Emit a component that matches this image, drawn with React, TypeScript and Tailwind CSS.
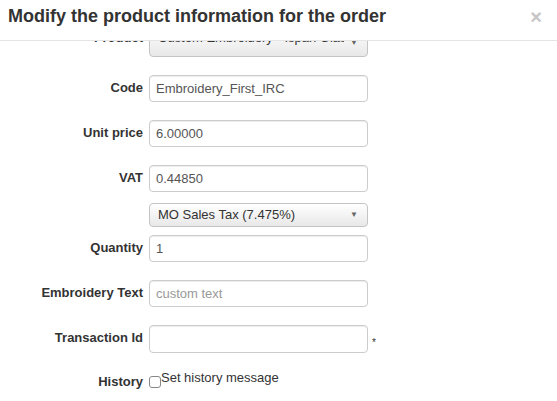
import React from 'react';

const font = { fontFamily: '"Liberation Sans", Arial, sans-serif' };

const Row: React.FC<{ label: string; className?: string; labelPad?: string; children: React.ReactNode }> = ({ label, className = '', labelPad = 'pt-[4px]', children }) => (
  <div className={`flex items-start ${className}`}>
    <label className={`w-[143px] shrink-0 ${labelPad} text-right text-[13px] font-bold leading-[18px] text-[#333]`}>{label}</label>
    <div className="ml-[6px] flex items-center">{children}</div>
  </div>
);

const TextInput: React.FC<{ value?: string; placeholder?: string; tall?: boolean }> = ({ value, placeholder, tall }) => (
  <input
    type="text"
    defaultValue={value}
    placeholder={placeholder}
    className={`w-[219px] ${tall ? 'h-[28px]' : 'h-[27px]'} rounded-[4px] border border-[#cccccc] bg-white px-[6px] text-[13px] text-[#555] placeholder:text-[#999] outline-none shadow-[inset_0_1px_1px_rgba(0,0,0,0.075)]`}
  />
);

const SelectBox: React.FC<{ text: string; h: string; extra?: string; arrow?: string }> = ({ text, h, extra = '', arrow = '' }) => (
  <div className={`flex w-[219px] ${h} ${extra} items-center justify-between overflow-hidden whitespace-nowrap rounded-[4px] border border-[#c4c4c4] bg-gradient-to-b from-white to-[#e8e8e8] pl-[8px] pr-[9px] text-[13px] text-[#333]`}>
    <span className="min-w-0 overflow-hidden">{text}</span>
    <span className={`ml-[6px] shrink-0 text-[8px] text-[#666] ${arrow}`}>▼</span>
  </div>
);

export default function App() {
  return (
    <div style={font} className="flex h-[401px] w-[557px] flex-col overflow-hidden bg-white">
      {/* header */}
      <div className="relative z-10 flex h-[41px] shrink-0 items-center justify-between border-b border-[#e5e5e5] bg-white pl-[8px] pr-[15px]">
        <h3 className="text-[18px] font-bold leading-[24px] text-[#333] -mt-[8px]">Modify the product information for the order</h3>
        <span className="text-[20px] font-bold leading-none text-[#c6c6c6] -mt-[6px]">×</span>
      </div>

      {/* body, scrolled a little so the first row is cut */}
      <div className="flex flex-1 flex-col overflow-hidden">
        <Row label="Product" className="-mt-[15px]" labelPad="pt-[3px]">
          <SelectBox text="Custom Embroidery - Ispan Glass" h="h-[31px]" extra="pb-[7px] text-[12px]" arrow="mt-[10px]" />
        </Row>
        <Row label="Code" className="mt-[18px]">
          <TextInput value="Embroidery_First_IRC" />
        </Row>
        <Row label="Unit price" className="mt-[18px]">
          <TextInput value="6.00000" />
        </Row>
        <Row label="VAT" className="mt-[18px]">
          <TextInput value="0.44850" />
        </Row>
        <div className="ml-[149px] mt-[11px]">
          <SelectBox text="MO Sales Tax (7.475%)" h="h-[24px]" />
        </div>
        <Row label="Quantity" className="mt-[8px]">
          <TextInput value="1" />
        </Row>
        <Row label="Embroidery Text" className="mt-[18px]">
          <TextInput placeholder="custom text" />
        </Row>
        <Row label="Transaction Id" className="mt-[18px]">
          <TextInput tall />
          <span className="ml-[4px] mt-[6px] text-[10px] text-[#333]">*</span>
        </Row>
        <div className="mt-[16px] flex items-start">
          <label className="w-[143px] shrink-0 pt-[4px] text-right text-[13px] font-bold leading-[18px] text-[#333]">History</label>
          <div className="ml-[6px] flex items-start">
            <span className="mt-[7px] h-[12px] w-[12px] rounded-[3px] border border-[#888] bg-white" />
            <span className="text-[13px] leading-[18px] text-[#333]">Set history message</span>
          </div>
        </div>
      </div>
    </div>
  );
}
